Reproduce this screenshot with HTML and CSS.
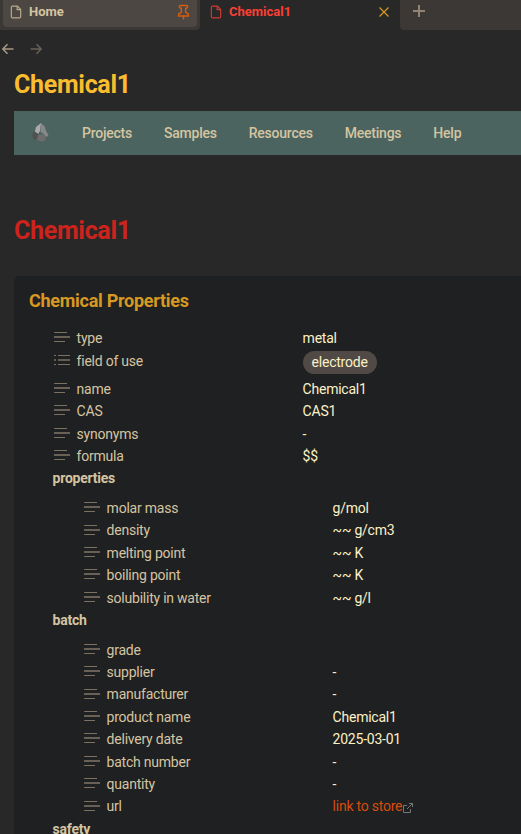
FILE: index.html
```html
<!DOCTYPE html>
<html lang="en">
<head>
<meta charset="utf-8">
<title>Chemical1</title>
<link rel="stylesheet" href="styles.css">
</head>
<body>
<svg class="sprite" aria-hidden="true">
  <symbol id="file" viewBox="0 0 24 24"><path d="M14.5 2H6a2 2 0 0 0-2 2v16a2 2 0 0 0 2 2h12a2 2 0 0 0 2-2V7.5L14.5 2z"/><path d="M14 2v6h6"/></symbol>
  <symbol id="text" viewBox="0 0 18 14"><path class="thin" d="M1.2 2.5H14M1.2 11.5H12"/><path class="thick" d="M1 7h16"/></symbol>
  <symbol id="list" viewBox="0 0 18 14"><path class="thin" d="M5 2.5h12M5 11.5h12M1 2.5h2M1 11.5h2"/><path class="thick" d="M5 7h12M1 7h2"/></symbol>
</svg>
<div class="tabs">
  <div class="pinned"><div class="tab home">
    <svg class="file"><use href="#file"/></svg><span>Home</span>
    <svg class="pin" viewBox="0 0 24 24"><path d="M12 17v5M5 17h14v-1.8a2 2 0 0 0-1.1-1.8l-1.8-.9A2 2 0 0 1 15 10.800V6h1a2 2 0 0 0 0-4H8a2 2 0 0 0 0 4h1v4.800a2 2 0 0 1-1.100 1.700l-1.800.9A2 2 0 0 0 5 15.200z"/></svg>
  </div></div>
  <div class="tab active">
    <svg class="file"><use href="#file"/></svg><span>Chemical1</span>
    <svg class="close" viewBox="0 0 10 10"><path d="M.5.5l9 9M9.500.5l-9 9"/></svg>
  </div>
  <div class="rest"><svg class="plus" viewBox="0 0 12 12"><path d="M6 0v12M0 6h12"/></svg></div>
</div>
<div class="history">
  <svg viewBox="0 0 12 12"><path d="M11.500 6H1M5.500 1.200L.8 6l4.700 4.800"/></svg>
  <svg class="off" viewBox="0 0 12 12"><path d="M.5 6H11M6.500 1.200L11.200 6l-4.700 4.800"/></svg>
</div>
<main>
  <div class="title">Chemical1</div>
  <nav>
    <svg class="logo" viewBox="0 0 17 19"><path fill="#aaa" d="M3 8L4 4l5-4-1 8-2 3-3-2z"/><path fill="#888" d="M9 0l4 4 1 4 2.500 4-2 2-4-4-2-1z"/><path fill="#505050" d="M2 8l4 3-1 5-3 1-2-4z"/><path fill="#6c6c6c" d="M6 12l5-1 3 3-1 4-4 .5L5 17z"/></svg>
    <span>Projects</span><span>Samples</span><span>Resources</span><span>Meetings</span><span>Help</span>
  </nav>
  <h1>Chemical1</h1>
  <section class="card">
    <h2>Chemical Properties</h2>
    <div class="group">
      <div class="row"><svg><use href="#text"/></svg><span class="key">type</span><span>metal</span></div>
      <div class="row tall"><svg><use href="#list"/></svg><span class="key">field of use</span><span class="pill">electrode</span></div>
      <div class="row"><svg><use href="#text"/></svg><span class="key">name</span><span>Chemical1</span></div>
      <div class="row"><svg><use href="#text"/></svg><span class="key">CAS</span><span>CAS1</span></div>
      <div class="row"><svg><use href="#text"/></svg><span class="key">synonyms</span><span>-</span></div>
      <div class="row"><svg><use href="#text"/></svg><span class="key">formula</span><span>$$</span></div>
      <h3>properties</h3>
      <div class="nested">
        <div class="row"><svg><use href="#text"/></svg><span class="key">molar mass</span><span>g/mol</span></div>
        <div class="row"><svg><use href="#text"/></svg><span class="key">density</span><span>~~ g/cm3</span></div>
        <div class="row"><svg><use href="#text"/></svg><span class="key">melting point</span><span>~~ K</span></div>
        <div class="row"><svg><use href="#text"/></svg><span class="key">boiling point</span><span>~~ K</span></div>
        <div class="row"><svg><use href="#text"/></svg><span class="key">solubility in water</span><span>~~ g/l</span></div>
      </div>
      <h3>batch</h3>
      <div class="nested">
        <div class="row"><svg><use href="#text"/></svg><span class="key">grade</span></div>
        <div class="row"><svg><use href="#text"/></svg><span class="key">supplier</span><span>-</span></div>
        <div class="row"><svg><use href="#text"/></svg><span class="key">manufacturer</span><span>-</span></div>
        <div class="row"><svg><use href="#text"/></svg><span class="key">product name</span><span>Chemical1</span></div>
        <div class="row"><svg><use href="#text"/></svg><span class="key">delivery date</span><span>2025-03-01</span></div>
        <div class="row"><svg><use href="#text"/></svg><span class="key">batch number</span><span>-</span></div>
        <div class="row"><svg><use href="#text"/></svg><span class="key">quantity</span><span>-</span></div>
        <div class="row"><svg><use href="#text"/></svg><span class="key">url</span><span class="link">link to store</span><svg class="ext" viewBox="0 0 12 12"><path d="M5 3.500H1.500v7h7V7M7 1.500h3.500V5M10.500 1.500L5 7"/></svg></div>
      </div>
      <h3>safety</h3>
    </div>
  </section>
</main>
</body>
</html>
```
FILE: styles.css
```css
* { box-sizing: border-box; }
body {
  margin: 0;
  height: 834px;
  overflow: hidden;
  background: #282828;
  color: #fbf1c7;
  font: 14px/22.4px Roboto, sans-serif;
}
svg { fill: none; stroke: currentColor; flex: none; }
.sprite { display: none; }
.tabs { display: flex; height: 30px; background: #282828; }
.pinned { width: 200px; padding: 0 3px 3px; background: #3c3836; border-bottom-right-radius: 4px; }
.tab { display: flex; align-items: center; font-size: 13px; font-weight: 700; height: 27px; padding-bottom: 3px; }
.home { background: #4c4743; border-radius: 0 0 4px 4px; color: #d5c4a1; padding-left: 6px; padding-right: 5px; }
.tab span { flex: 1; }
.active { width: 200px; color: #fb3f34; padding-left: 9px; padding-right: 11px; }
.file { width: 14px; height: 16px; stroke-width: 2; margin-right: 6px; opacity: .8; }
.pin { width: 17px; height: 17px; color: #d65d0e; stroke-width: 2; }
.close { width: 10px; height: 10px; color: #d79921; stroke-width: 1.2; }
.rest { flex: 1; background: #3c3836; border-bottom-left-radius: 4px; padding: 5px 0 0 13px; color: #928374; }
.plus { display: block; width: 12px; height: 12px; stroke-width: 2; }
.history { display: flex; gap: 16px; height: 38px; padding: 13px 0 0 2px; color: #a89984; }
.history svg { width: 12px; height: 12px; stroke-width: 1.5; }
.history .off { opacity: .5; }
main { padding-left: 14px; letter-spacing: -.23px; }
.title, h1 { margin: 0; height: 34px; font-size: 25px; line-height: 34px; font-weight: 700; letter-spacing: -.3px; color: #fabd2f; }
nav { display: flex; align-items: center; gap: 32px; height: 44px; margin-top: 9px; padding-left: 18px; background: #4b645f; color: #d5c4a1; font-weight: 500; }
.logo { width: 17px; height: 19px; stroke: none; margin: -2px 1px 0 0; }
h1 { margin-top: 59px; color: #cc241d; }
.card { height: 570px; margin-top: 28px; padding: 10px 0 0 15px; background: #1f2021; border-top-left-radius: 5px; }
h2 { margin: 0; font-size: 18px; line-height: 29px; font-weight: 700; letter-spacing: -.28px; color: #d79921; }
.group { padding: 12px 0 0 23.6px; }
.row { display: flex; align-items: center; height: 22.4px; white-space: nowrap; }
.row svg { width: 18px; height: 14px; margin: 0 6px 2px 0; color: #7c7264; }
.thin { stroke-width: 1; }
.thick { stroke-width: 1.6; }
.key { width: 226px; color: #d5c4a1; }
.tall { height: 28.4px; align-items: flex-start; }
.tall svg { margin-top: 4px; }
.tall .key { padding-top: .6px; }
.pill { height: 23px; line-height: 22px; margin-top: 1.5px; padding: 0 9px; border-radius: 12px; background: #504945; }
h3 { margin: 0 0 7.3px; font-size: 14px; line-height: 22.4px; font-weight: 700; color: #d5c4a1; }
.nested { padding-left: 30px; }
.link { color: #d64d0e; }
.row .ext { width: 12px; height: 12px; margin: 3px 0 0; color: #777; }
```
